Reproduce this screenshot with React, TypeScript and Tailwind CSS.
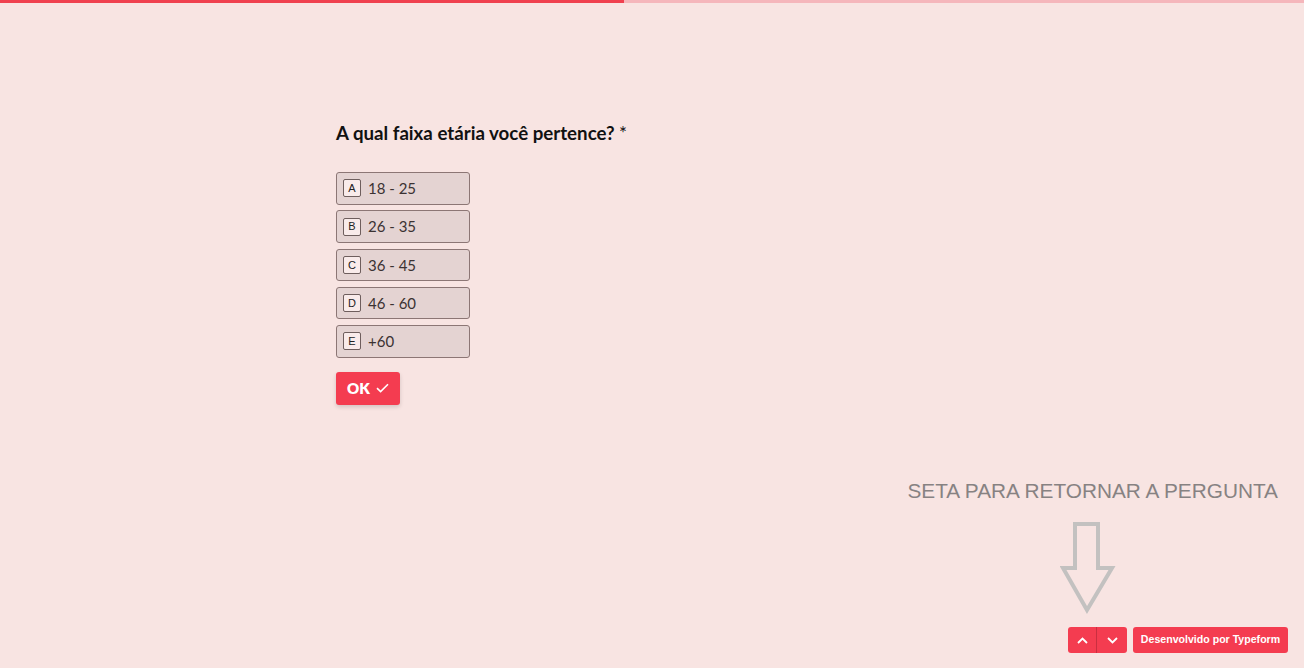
import React from 'react';

const options = [
  { key: 'A', label: '18 - 25' },
  { key: 'B', label: '26 - 35' },
  { key: 'C', label: '36 - 45' },
  { key: 'D', label: '46 - 60' },
  { key: 'E', label: '+60' },
];

function ChoiceRow({ letter, label }: { letter: string; label: string }) {
  return (
    <div className="flex h-[32.5px] w-[134px] items-center rounded-[3px] border border-[#8c7675] bg-[#e4d3d2] pl-[6px]">
      <span className="flex h-[18px] w-[18px] items-center justify-center rounded-[2px] border border-[#6e5e5d] bg-[#f9ebea] font-['Liberation_Sans',sans-serif] text-[11px] text-[#222]">
        {letter}
      </span>
      <span className="ml-[7px] font-['Lato',sans-serif] text-[15px] text-[#3b3232]">{label}</span>
    </div>
  );
}

export default function App() {
  return (
    <main className="relative h-[668px] w-full overflow-hidden bg-[#f8e4e2]">
      <div className="flex h-[3px] w-full">
        <div className="h-full w-[624px] bg-[#f0404f]" />
        <div className="h-full flex-1 bg-[#f5b6bb]" />
      </div>

      <section className="pl-[336px] pt-[116px]">
        <h1 className="font-['Lato',sans-serif] text-[18.7px] font-bold leading-[28px] text-[#111]">
          A qual faixa etária você pertence? <span className="font-normal">*</span>
        </h1>
        <div className="mt-[25px] flex flex-col gap-[5.8px]">
          {options.map((o) => (
            <ChoiceRow key={o.key} letter={o.key} label={o.label} />
          ))}
        </div>
        <button className="mt-[14px] flex h-[33px] w-[64px] items-center justify-center gap-[6px] rounded-[3px] bg-[#f43c50] font-['Lato',sans-serif] text-[15px] font-extrabold text-white shadow-[0_2px_4px_rgba(0,0,0,0.15)]">
          OK
          <svg width="13" height="10" viewBox="0 0 13 10" fill="none">
            <path d="M1 5.2L4.6 8.6L12 1.2" stroke="white" strokeWidth="1.6" />
          </svg>
        </button>
      </section>

      <div className="absolute bottom-[15px] right-[16px] flex flex-col items-end">
        <p className="mr-[10px] font-['Liberation_Sans',sans-serif] text-[20.8px] leading-[24px] text-[#878282]">
          SETA PARA RETORNAR A PERGUNTA
        </p>
        <svg className="mr-[172px] mt-[18px]" width="56" height="94" viewBox="0 0 56 94">
          <path
            d="M15 3 H38 V47 H52 L27 89 L3 47 H15 Z"
            fill="none"
            stroke="#c3c1c0"
            strokeWidth="4"
            strokeLinejoin="miter"
          />
        </svg>
        <div className="mt-[12px] flex gap-[6px]">
          <div className="flex h-[26px] overflow-hidden rounded-[3px] bg-[#f43c50]">
            <button className="flex w-[29px] items-center justify-center border-r border-[#c92f40]">
              <svg width="11" height="7" viewBox="0 0 11 7" fill="none">
                <path d="M1 6L5.5 1.5L10 6" stroke="white" strokeWidth="1.8" />
              </svg>
            </button>
            <button className="flex w-[30px] items-center justify-center">
              <svg width="11" height="7" viewBox="0 0 11 7" fill="none">
                <path d="M1 1L5.5 5.5L10 1" stroke="white" strokeWidth="1.8" />
              </svg>
            </button>
          </div>
          <button className="flex h-[26px] w-[155px] items-center justify-center rounded-[3px] bg-[#f43c50] font-['Liberation_Sans',sans-serif] text-[10.6px] font-bold text-white">
            Desenvolvido por Typeform
          </button>
        </div>
      </div>
    </main>
  );
}
